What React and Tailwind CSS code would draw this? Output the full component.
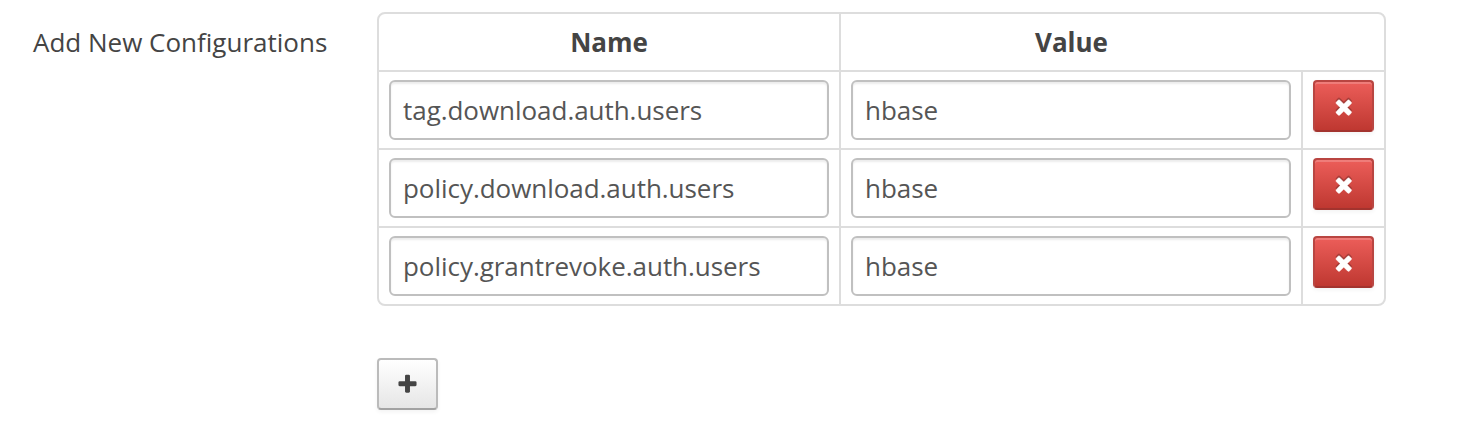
const TIMES =
  'M1490 1322q0 40-28 68l-136 136q-28 28-68 28t-68-28l-294-294-294 294q-28 28-68 28t-68-28l-136-136q-28-28-28-68t28-68l294-294-294-294q-28-28-28-68t28-68l136-136q28-28 68-28t68 28l294 294 294-294q28-28 68-28t68 28l136 136q28 28 28 68t-28 68l-294 294 294 294q28 28 28 68z';
const PLUS =
  'M1600 736v192q0 40-28 68t-68 28h-416v416q0 40-28 68t-68 28h-192q-40 0-68-28t-28-68v-416h-416q-40 0-68-28t-28-68v-192q0-40 28-68t68-28h416v-416q0-40 28-68t68-28h192q40 0 68 28t28 68v416h416q40 0 68 28t28 68z';

const rows = [
  { name: 'tag.download.auth.users', value: 'hbase' },
  { name: 'policy.download.auth.users', value: 'hbase' },
  { name: 'policy.grantrevoke.auth.users', value: 'hbase' },
];

function Icon({ d, className }) {
  return (
    <svg viewBox="0 0 1792 1792" fill="currentColor" aria-hidden="true" className={className}>
      <path d={d} />
    </svg>
  );
}

function Field({ value, label }) {
  return (
    <input
      type="text"
      aria-label={label}
      defaultValue={value}
      className="block h-[60px] w-[440px] rounded-md border-2 border-[#c0c0c0] bg-white px-3 text-[26px] tracking-[-0.04px] text-[#555] shadow-[inset_0_2px_2px_rgba(0,0,0,0.075)] outline-none"
    />
  );
}

function ConfigRow({ name, value }) {
  return (
    <div className="flex h-[78px] border-t-2 border-[#ddd]">
      <div className="w-[460px] pt-2 pl-2.5">
        <Field value={name} label="Name" />
      </div>
      <div className="w-[462px] border-l-2 border-[#ddd] pt-2 pl-2.5">
        <Field value={value} label="Value" />
      </div>
      <div className="flex-1 border-l-2 border-[#ddd] pt-2 pl-2.5">
        <button
          type="button"
          aria-label="Remove"
          className="flex h-[52px] w-[61px] items-center justify-center rounded-[4px] border-2 border-[#b94541] border-b-[#a3332e] bg-linear-to-b from-[#ee5f5b] to-[#bd362f] bg-origin-border text-white shadow-[inset_0_2px_0_rgba(255,255,255,0.2),0_2px_4px_rgba(0,0,0,0.05)]"
        >
          <Icon
            d={TIMES}
            className="mt-px size-[23.5px] stroke-current stroke-[30] drop-shadow-[0_-2px_0_rgba(0,0,0,0.25)]"
          />
        </button>
      </div>
    </div>
  );
}

export default function App() {
  return (
    <div className="flex h-[434px] w-[1466px] bg-white pt-3 pl-[33px] font-['Open_Sans',sans-serif] text-[26px] text-[#444]">
      <div className="w-[344px] shrink-0 pt-2.5 leading-10">Add New Configurations</div>
      <div>
        <div className="h-[294px] w-[1009px] rounded-lg border-2 border-[#ddd]">
          <div className="flex h-14 text-center leading-[57px] font-bold">
            <div className="w-[460px]">Name</div>
            <div className="flex-1 border-l-2 border-[#ddd]">
              <div className="w-[461px]">Value</div>
            </div>
          </div>
          {rows.map((row) => (
            <ConfigRow key={row.name} name={row.name} value={row.value} />
          ))}
        </div>
        <button
          type="button"
          aria-label="Add"
          className="mt-[52px] flex h-[52px] w-[61px] items-center justify-center rounded-[4px] border-2 border-[#bbb] border-b-[#a2a2a2] bg-linear-to-b from-white to-[#e6e6e6] text-[#444] shadow-[inset_0_2px_0_rgba(255,255,255,0.2),0_2px_4px_rgba(0,0,0,0.05)]"
        >
          <Icon d={PLUS} className="mt-px size-[23px]" />
        </button>
      </div>
    </div>
  );
}
